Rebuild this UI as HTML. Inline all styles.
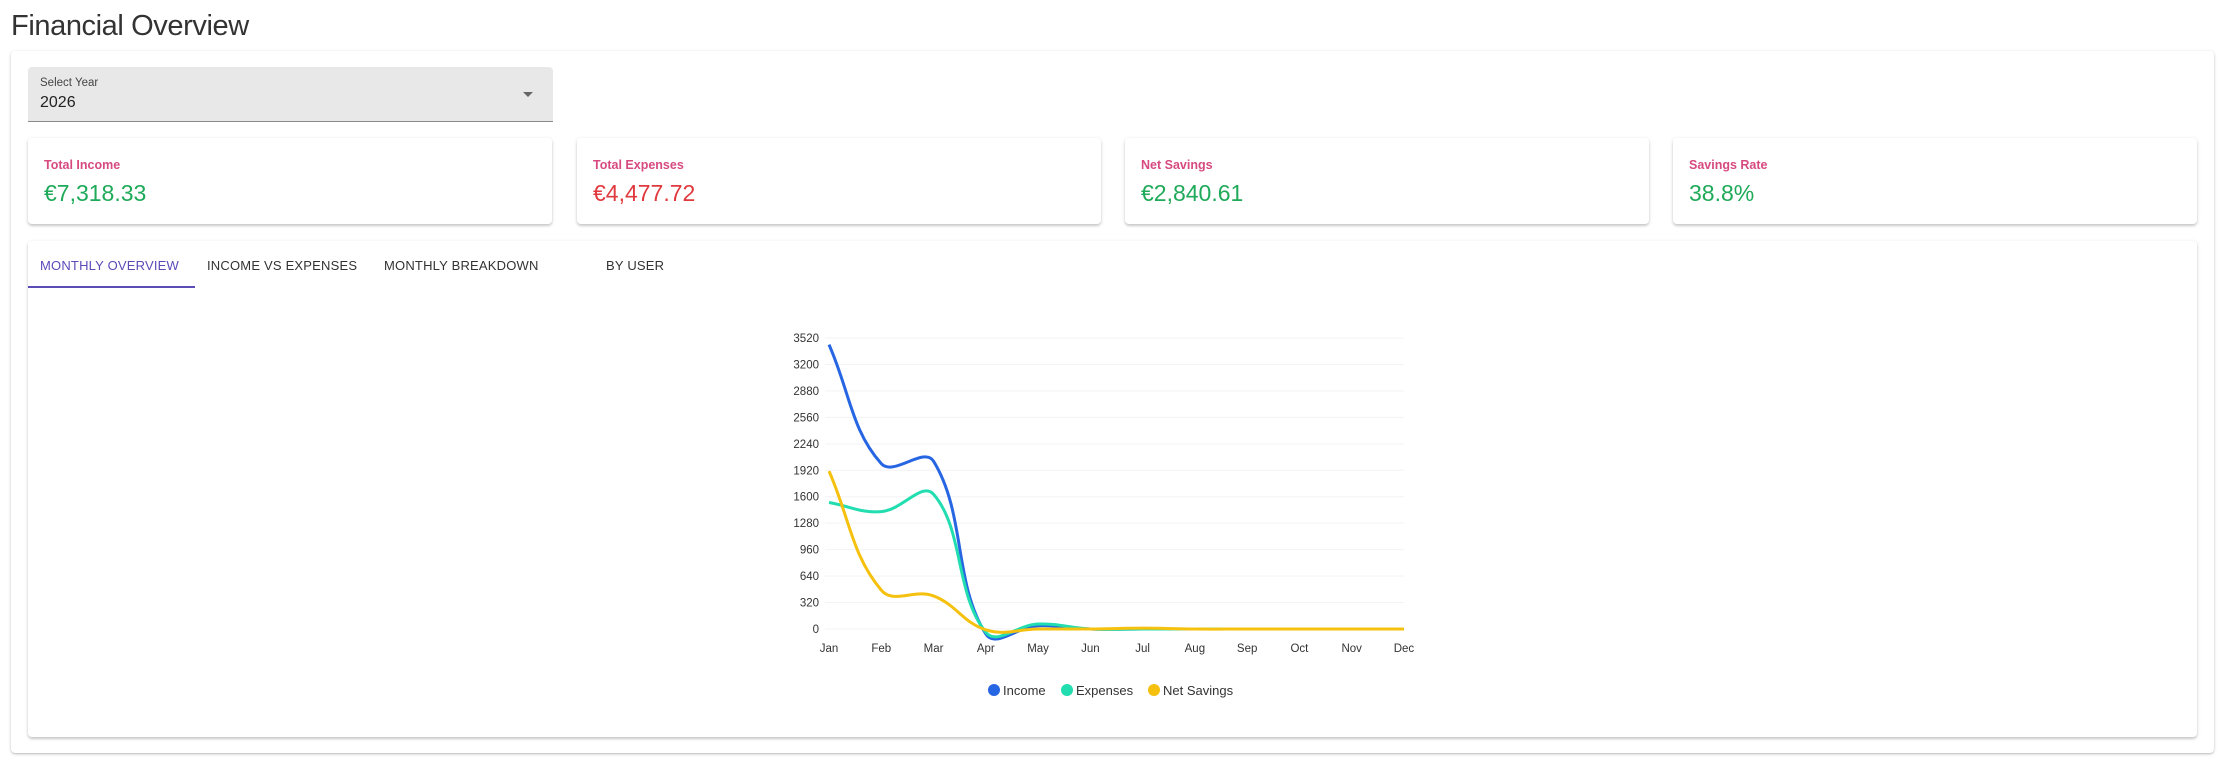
<!DOCTYPE html>
<html><head><meta charset="utf-8">
<style>
*{box-sizing:border-box;margin:0;padding:0}
body{width:2227px;height:763px;background:#fff;font-family:"Liberation Sans",Arial,sans-serif;position:relative;overflow:hidden;color:#333}
.abs{position:absolute}
h1{position:absolute;left:11px;top:10px;font-size:29px;font-weight:400;color:#333;letter-spacing:-0.4px}
.outer{left:11px;top:51px;width:2203px;height:702px;border-radius:4px;box-shadow:0 1px 3px rgba(0,0,0,.2),0 1px 1px rgba(0,0,0,.1)}
.sel{left:28px;top:67px;width:525px;height:55px;background:#e8e8e8;border-radius:4px 4px 0 0;border-bottom:1px solid #8a8a8a}
.sel .l{position:absolute;left:12px;top:10px;font-size:11.5px;color:#444}
.sel .v{position:absolute;left:12px;top:27px;font-size:16px;color:#222}
.sel .a{position:absolute;left:495px;top:25px;width:0;height:0;border-left:5px solid transparent;border-right:5px solid transparent;border-top:5px solid #666}
.card{top:138px;height:86px;width:524px;border-radius:4px;box-shadow:0 2px 2px rgba(0,0,0,.14),0 1px 4px rgba(0,0,0,.12)}
.card .l{position:absolute;left:16px;top:20px;font-size:12.5px;color:#d64a80;font-weight:bold}
.card .v{position:absolute;left:16px;top:42px;font-size:23px;color:#1faa59}
.tabs{left:28px;top:241px;width:2169px;height:496px;border-radius:4px;box-shadow:0 2px 2px rgba(0,0,0,.14),0 1px 4px rgba(0,0,0,.12)}
.tab{position:absolute;top:258px;font-size:13px;font-weight:500;color:#333;letter-spacing:.2px}
</style></head><body>
<h1>Financial Overview</h1>
<div class="abs outer"></div>
<div class="abs sel"><div class="l">Select Year</div><div class="v">2026</div><div class="a"></div></div>
<div class="abs card" style="left:28px"><div class="l">Total Income</div><div class="v">€7,318.33</div></div>
<div class="abs card" style="left:577px"><div class="l">Total Expenses</div><div class="v" style="color:#e0393e">€4,477.72</div></div>
<div class="abs card" style="left:1125px"><div class="l">Net Savings</div><div class="v">€2,840.61</div></div>
<div class="abs card" style="left:1673px"><div class="l">Savings Rate</div><div class="v">38.8%</div></div>
<div class="abs tabs"></div>
<div class="tab" style="left:40px;color:#5b4bb7">MONTHLY OVERVIEW</div>
<div class="tab" style="left:207px">INCOME VS EXPENSES</div>
<div class="tab" style="left:384px">MONTHLY BREAKDOWN</div>
<div class="tab" style="left:606px">BY USER</div>
<div class="abs" style="left:28px;top:286px;width:167px;height:2px;background:#5b4bb7"></div>
<svg class="abs" style="left:0;top:0" width="2227" height="763" id="ch"></svg>
<script>
var svg=document.getElementById('ch');
var x0=829,dx=52.27,y0=629,k=(629-338)/3520;
var g='';
var ticks=[3520,3200,2880,2560,2240,1920,1600,1280,960,640,320,0];
ticks.forEach(function(t){var y=y0-t*k;g+='<line x1="825" x2="1404" y1="'+y+'" y2="'+y+'" stroke="#f3f3f3"/><text x="819" y="'+(y+4)+'" text-anchor="end" font-size="11.5" fill="#333" font-family="Liberation Sans, Arial, sans-serif">'+t+'</text>';});
var m=['Jan','Feb','Mar','Apr','May','Jun','Jul','Aug','Sep','Oct','Nov','Dec'];
m.forEach(function(s,i){g+='<text x="'+(x0+i*dx)+'" y="652" text-anchor="middle" font-size="11.5" fill="#333" font-family="Liberation Sans, Arial, sans-serif">'+s+'</text>';});
function path(v,c){var p=v.map(function(a,i){return [x0+i*dx,y0-a*k]});var d='M'+p[0][0]+','+p[0][1];
var cps=p.map(function(c2,i){var pr=p[i-1]||c2,nx=p[i+1]||c2;var d01=Math.hypot(c2[0]-pr[0],c2[1]-pr[1]),d12=Math.hypot(nx[0]-c2[0],nx[1]-c2[1]);var s=d01+d12||1;var fa=0.4*d01/s,fb=0.4*d12/s;return {p:[c2[0]-fa*(nx[0]-pr[0]),c2[1]-fa*(nx[1]-pr[1])],n:[c2[0]+fb*(nx[0]-pr[0]),c2[1]+fb*(nx[1]-pr[1])]};});
for(var i=1;i<p.length;i++){d+=' C'+cps[i-1].n[0]+','+cps[i-1].n[1]+' '+cps[i].p[0]+','+cps[i].p[1]+' '+p[i][0]+','+p[i][1];}
return '<path d="'+d+'" fill="none" stroke="'+c+'" stroke-width="3"/>';}
g+=path([3440,2000,2030,-60,40,0,0,0,0,0,0,0],'#2766e3');
g+=path([1530,1420,1630,-40,60,0,0,0,0,0,0,0],'#22ddb0');
g+=path([1910,470,400,-10,0,0,10,0,0,0,0,0],'#f5c10e');
g+='<circle cx="994" cy="690" r="6" fill="#2766e3"/><text x="1003" y="695" font-size="13" fill="#333" font-family="Liberation Sans, Arial, sans-serif">Income</text>';
g+='<circle cx="1067" cy="690" r="6" fill="#22ddb0"/><text x="1076" y="695" font-size="13" fill="#333" font-family="Liberation Sans, Arial, sans-serif">Expenses</text>';
g+='<circle cx="1154" cy="690" r="6" fill="#f5c10e"/><text x="1163" y="695" font-size="13" fill="#333" font-family="Liberation Sans, Arial, sans-serif">Net Savings</text>';
svg.innerHTML=g;
</script>
</body></html>
